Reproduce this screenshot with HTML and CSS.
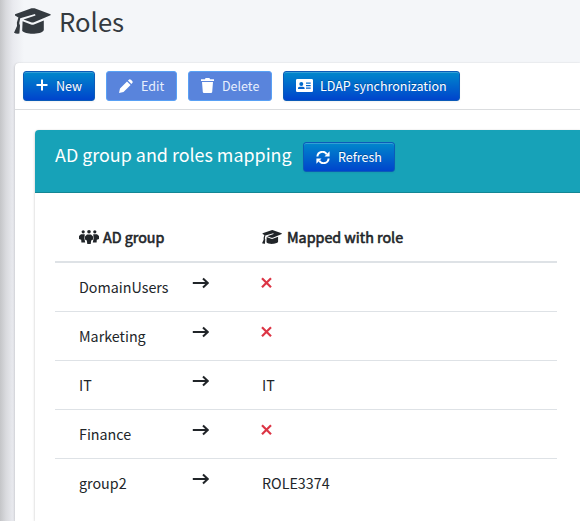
FILE: index.html
```html
<!DOCTYPE html>
<html lang="en">
<head>
<meta charset="utf-8">
<title>Roles</title>
<link rel="stylesheet" href="styles.css">
</head>
<body>
<svg class="defs" aria-hidden="true">
  <symbol id="cap" viewBox="0 0 37 26">
    <path d="M1 6.2 17.5 .3Q19 0 20.5.3L36.5 6.2Q37 6.8 36.5 7.3L20 14.2Q18.5 14.7 17 14.2L9.5 11.4 21.5 7.4 21 6 6.2 10.2 5.2 15.2 6 17.5 5.4 25.5Q2.5 26 0 24.8L3 18 2.9 14.5 4.4 9.4 1 7.6z"/>
    <path d="M8.6 13.2 17 16.4Q18.6 16.9 20 16.4L29.8 12.4V22C29 24.8 23 25.8 18.5 25.8 14 25.8 9.5 24.8 8.2 22.8z"/>
  </symbol>
  <symbol id="arrow" viewBox="0 0 17 12"><path d="M.8 6H15.5M11 1.5 15.7 6 11 10.5" fill="none" stroke="currentColor" stroke-width="2"/></symbol>
  <symbol id="cross" viewBox="0 0 12 12"><path d="M1 1.2 10 10.2M10 1.2 1 10.2" fill="none" stroke="currentColor" stroke-width="2.2"/></symbol>
</svg>
<main class="content">
  <h1 class="title"><svg class="title-icon"><use href="#cap"/></svg>Roles</h1>
  <section class="panel">
    <div class="toolbar">
      <button class="btn new"><svg viewBox="0 0 12 12"><path d="M6 .5V11.5M.5 6H11.5" stroke="currentColor" stroke-width="2"/></svg>New</button>
      <button class="btn edit" disabled><svg viewBox="0 0 14 14"><path d="M0 14 1 9.5 8 2.4 11.6 6 4.5 13zM8.9 1.6 10.2.4Q11 0 12 .8L13.4 2.2Q14 3 13.5 3.8L12.4 5.1z"/></svg>Edit</button>
      <button class="btn delete" disabled><svg viewBox="0 0 13 15"><path d="M0 1.2H4L4.5 0H8.5L9 1.2H13V3H0zM1 4H12L11.2 14Q11.1 15 10 15H3Q1.9 15 1.8 14z"/></svg>Delete</button>
      <button class="btn ldap"><svg viewBox="0 0 17 13"><path fill-rule="evenodd" d="M1.3 0H15.7Q17 0 17 1.3V11.7Q17 13 15.7 13H1.3Q0 13 0 11.7V1.3Q0 0 1.3 0zM5.3 3A2 2 0 1 0 5.3 7 2 2 0 1 0 5.3 3zM2 10H8.6V8.8Q8 7.7 6.6 7.7H4Q2.5 7.7 2 8.8zM10 3.5V4.7H14.7V3.5zM10 6V7.2H14.7V6zM10 8.5V9.7H14.7V8.5z"/></svg>LDAP synchronization</button>
    </div>
    <div class="panel-body">
      <section class="card">
        <header class="card-header">
          <h2>AD group and roles mapping</h2>
          <button class="btn refresh"><svg viewBox="0 0 14 13"><path d="M1.4 5.5A5 5 0 0 1 10.7 3.3M12.6 7.5A5 5 0 0 1 3.3 9.7" fill="none" stroke="currentColor" stroke-width="2"/><path d="M13.6.3V5.4H8.5zM.4 12.7V7.6H5.5z"/></svg>Refresh</button>
        </header>
        <div class="table">
          <div class="row head">
            <span class="group"><svg class="people" viewBox="0 0 20 14"><circle cx="4.2" cy="1.8" r="1.6"/><circle cx="10" cy="1.8" r="1.8"/><circle cx="15.8" cy="1.8" r="1.6"/><path d="M2 4.2H5.8L5.4 8.5 6.2 12.5H2.4L2.2 9.8 0 9V6zM18 4.2H14.2L14.6 8.5 13.8 12.5H17.6L17.8 9.8 20 9V6zM8 4.4H12L14 6.5V9.5L12.2 10.5 11.7 14H8.3L7.8 10.5 6 9.5V6.5z"/></svg>AD group</span>
            <span></span>
            <span><svg class="small-cap"><use href="#cap"/></svg>Mapped with role</span>
          </div>
          <div class="row"><span>DomainUsers</span><svg class="arrow"><use href="#arrow"/></svg><svg class="cross"><use href="#cross"/></svg></div>
          <div class="row"><span>Marketing</span><svg class="arrow"><use href="#arrow"/></svg><svg class="cross"><use href="#cross"/></svg></div>
          <div class="row"><span>IT</span><svg class="arrow"><use href="#arrow"/></svg><span>IT</span></div>
          <div class="row"><span>Finance</span><svg class="arrow"><use href="#arrow"/></svg><svg class="cross"><use href="#cross"/></svg></div>
          <div class="row"><span>group2</span><svg class="arrow"><use href="#arrow"/></svg><span>ROLE3374</span></div>
        </div>
      </section>
    </div>
  </section>
</main>
</body>
</html>
```
FILE: styles.css
```css
* { box-sizing: border-box; }
body {
  margin: 0;
  height: 521px;
  overflow: hidden;
  background: linear-gradient(90deg, #c4c5c8 0, #d9dade 6px, #e9eaef 13px, #f4f6f9 24px);
  color: #212529;
  font: 14.3px/24px "Noto Sans CJK SC", "Noto Sans", sans-serif;
}
svg { fill: currentColor; flex: none; }
.defs { position: absolute; width: 0; height: 0; }
.content { height: 521px; padding-left: 15px; }
.title {
  display: flex;
  height: 63px;
  margin: 0;
  padding-top: 3px;
  color: #343a40;
  font-size: 25.7px;
  font-weight: 400;
  line-height: 35px;
}
.title-icon { width: 37px; height: 26px; margin: 5px 8px 0 -1px; }
.panel {
  height: 458px;
  background: #fff;
  border-radius: 4px 0 0 0;
  box-shadow: 0 0 1px rgba(0,0,0,.13), 0 1px 3px rgba(0,0,0,.2);
}
.toolbar {
  display: flex;
  gap: 11px;
  height: 47px;
  padding: 8px;
  border-bottom: 1px solid #dbdddf;
}
.btn {
  display: flex;
  align-items: center;
  flex: none;
  height: 30px;
  padding: 0 0 0 12px;
  border: 1px solid #0c5bb8;
  border-radius: 3px;
  background: linear-gradient(#0088cc, #0044cc);
  box-shadow: inset 0 1px 0 rgba(255,255,255,.2), 0 1px 2px rgba(0,0,0,.05);
  color: #fff;
  font: 12.5px/20px "Noto Sans CJK SC", "Noto Sans", sans-serif;
  text-shadow: 0 -1px 0 rgba(0,0,0,.25);
  white-space: nowrap;
}
.btn:disabled { background: #5984dc; border-color: #59a1f5; color: #e8effc; box-shadow: none; text-shadow: none; }
.btn:disabled svg { color: #fff; }
.new { width: 72px; }
.new svg { width: 12px; height: 12px; margin: -2px 8px 0 0; }
.edit { width: 71px; }
.edit svg { width: 14px; height: 14px; margin-right: 8px; }
.delete { width: 84px; }
.delete svg { width: 13px; height: 15px; margin: -1px 8px 0 0; }
.ldap { width: 177px; }
.ldap svg { width: 17px; height: 13px; margin: -1px 7px 0 0; }
.refresh { width: 92px; }
.refresh svg { width: 14px; height: 13px; margin-right: 8px; }
.panel-body { height: 411px; padding: 20px 0 0 20px; }
.card {
  height: 391px;
  border-radius: 4px 0 0 0;
  background: #fff;
  box-shadow: 0 0 1px rgba(0,0,0,.13), 0 1px 3px rgba(0,0,0,.2);
}
.card-header {
  display: flex;
  gap: 12px;
  height: 63px;
  padding: 12px 20px;
  border-bottom: 1px solid #148694;
  border-radius: 4px 0 0 0;
  background: #17a2b8;
  color: #fff;
}
h2 { margin: 0; width: 236px; font-size: 17.9px; font-weight: 400; line-height: 25px; white-space: nowrap; }
.table { width: 502px; padding: 20px 0 0; margin-left: 20px; }
.row {
  display: grid;
  grid-template-columns: 113px 70px 1fr;
  height: 49px;
  padding: 12px 24px;
  border-bottom: 1px solid #dee2e6;
}
.row:last-child { border: 0; }
.head { height: 50px; border-bottom-width: 2px; -webkit-text-stroke: .6px currentColor; }
.head svg { -webkit-text-stroke: 0; }
.head span { display: flex; white-space: nowrap; }
.people { width: 20px; height: 14px; margin: 5px 4px 0 0; }
.small-cap { width: 20px; height: 14px; margin: 5px 5px 0 0; }
.arrow { width: 17px; height: 12px; margin-top: 2px; }
.cross { width: 12px; height: 12px; margin: 2px 0 0 -1px; color: #dc3545; }
```
